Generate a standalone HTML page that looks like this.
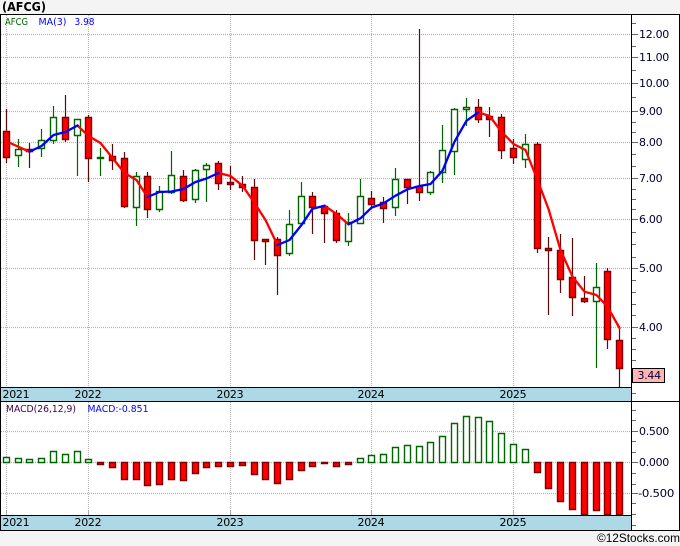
<!DOCTYPE html>
<html><head><meta charset="utf-8"><style>
html,body{margin:0;padding:0;background:#f4f4f4}
svg{display:block}
text{font-family:"DejaVu Sans","Liberation Sans",sans-serif;font-size:11px;letter-spacing:-.3px;fill:#000033}
</style></head><body>
<svg width="680" height="546" viewBox="0 0 680 546" xmlns="http://www.w3.org/2000/svg">
<rect width="680" height="546" fill="#f4f4f4"/>
<rect x="0" y="14" width="680" height="516" fill="#fff"/>
<rect x="1" y="387" width="630" height="14" fill="#add8e6"/>
<rect x="1" y="515" width="630" height="15" fill="#add8e6"/>
<g stroke="#b4b4b4" stroke-width="1.2" stroke-dasharray="1 1" fill="none">
<path d="M1 34.5H631M1 57.5H631M1 83.5H631M1 111.5H631M1 142.5H631M1 178.5H631M1 219.5H631M1 268.5H631M1 327.5H631M1 431.5H631M1 462.5H631M1 493.5H631"/>
<path d="M6.5 15V387M88.5 15V387M230.5 15V387M371.5 15V387M513.5 15V387M6.5 402V515M88.5 402V515M230.5 402V515M371.5 402V515M513.5 402V515"/>
</g>
<path d="M6.5 510V515M88.5 510V515M230.5 510V515M371.5 510V515M513.5 510V515" stroke="#aaa" fill="none" shape-rendering="crispEdges"/>
<g fill="none">
<path stroke="#006400" stroke-width="1.2" d="M18.5 139V167M41.5 129V157M53.5 106V144M77.5 119V176M100.5 148V176M136.5 172V226M159.5 186V212M171.5 151V194M195.5 169V203M206.5 163V202M289.5 210V256M301.5 182V223M348.5 213V246M360.5 179V223M395.5 168V216M430.5 171V195M442.5 125V183M454.5 108V175M466.5 98V126M525.5 134V168M596.5 263V368"/>
<path stroke="#5a0a0a" stroke-width="1.2" d="M6.5 109V163M29.5 143V168M65.5 95V142M88.5 115V182M112.5 144V170M124.5 152V208M147.5 172V218M183.5 170V202M218.5 161V190M230.5 166V190M242.5 176V192M254.5 179V260M265.5 239V265M277.5 237V295M312.5 192V234M324.5 206V243M336.5 210V243M371.5 191V208M383.5 197V223M407.5 179V204M419.5 29V201M478.5 99V123M489.5 107V137M501.5 114V159M513.5 139V164M537.5 142V253M548.5 237V315M560.5 234V293M572.5 238V316M584.5 276V303M607.5 268V349M619.5 328V387"/>
<path stroke="#006400" stroke-width="1.4" fill="#fff" d="M15.5 149.5h6V155.5h-6zM38.5 140.5h6V148.5h-6zM50.5 117.5h6V140.5h-6zM74.5 119.5h6V135.5h-6zM133.5 176.5h6V207.5h-6zM156.5 191.5h6V209.5h-6zM168.5 175.5h6V192.5h-6zM192.5 170.5h6V199.5h-6zM203.5 165.5h6V169.5h-6zM286.5 224.5h6V253.5h-6zM298.5 196.5h6V223.5h-6zM345.5 222.5h6V241.5h-6zM357.5 196.5h6V223.5h-6zM392.5 179.5h6V207.5h-6zM427.5 172.5h6V192.5h-6zM439.5 150.5h6V172.5h-6zM451.5 109.5h6V151.5h-6zM463.5 107.5h6V109.5h-6zM522.5 144.5h6V159.5h-6zM593.5 287.5h6V301.5h-6z"/>
<path stroke="#006400" stroke-width="1.4" fill="#006400" d="M97.5 157.5h6V158.5h-6z"/>
<path stroke="#800000" stroke-width="1.4" fill="#f00" d="M3.5 131.5h6V157.5h-6zM26.5 149.5h6V151.5h-6zM62.5 117.5h6V139.5h-6zM85.5 117.5h6V158.5h-6zM109.5 156.5h6V160.5h-6zM121.5 158.5h6V206.5h-6zM144.5 176.5h6V209.5h-6zM180.5 176.5h6V200.5h-6zM215.5 163.5h6V183.5h-6zM227.5 182.5h6V184.5h-6zM239.5 184.5h6V187.5h-6zM251.5 187.5h6V240.5h-6zM262.5 239.5h6V241.5h-6zM274.5 239.5h6V255.5h-6zM309.5 196.5h6V207.5h-6zM321.5 206.5h6V213.5h-6zM333.5 213.5h6V240.5h-6zM368.5 198.5h6V204.5h-6zM380.5 202.5h6V208.5h-6zM404.5 179.5h6V187.5h-6zM416.5 186.5h6V192.5h-6zM475.5 107.5h6V119.5h-6zM486.5 116.5h6V119.5h-6zM498.5 117.5h6V150.5h-6zM510.5 148.5h6V157.5h-6zM534.5 144.5h6V248.5h-6zM545.5 248.5h6V250.5h-6zM557.5 250.5h6V279.5h-6zM569.5 277.5h6V297.5h-6zM581.5 298.5h6V301.5h-6zM604.5 271.5h6V339.5h-6zM616.5 340.5h6V368.5h-6z"/>
</g>
<g fill="none" stroke-width="2.3" stroke-linejoin="round" stroke-linecap="round">
<polyline stroke="#f00" points="10,143 29.5,151.7"/>
<polyline stroke="#f00" points="77.5,125.5 88.5,136 100.5,143 112.5,158 124.5,173 136.5,180 147.5,197"/>
<polyline stroke="#f00" points="218.5,173 230.5,176 242.5,185.7 254.5,203 265.5,220 277.5,245"/>
<polyline stroke="#f00" points="324.5,205.7 336.5,214 348.5,224.3"/>
<polyline stroke="#f00" points="478.5,112.3 489.5,116 501.5,131.7 513.5,144 525.5,150 537.5,180 548.5,209 560.5,250 572.5,276.7 584.5,291.7 596.5,295 607.5,306.7 619.5,328"/>
<polyline stroke="#00f" points="29.5,151.7 41.5,146 53.5,135 65.5,132 77.5,125.5"/>
<polyline stroke="#00f" points="147.5,197 159.5,192 171.5,191.5 183.5,189 195.5,182 206.5,178.5 218.5,173"/>
<polyline stroke="#00f" points="277.5,245 289.5,240 301.5,225 312.5,208.7 324.5,205.7"/>
<polyline stroke="#00f" points="348.5,224.3 360.5,218.3 371.5,207.7 383.5,203.3 395.5,195.7 407.5,189.3 419.5,186 430.5,184 442.5,170.7 454.5,141.7 466.5,120.7 478.5,112.3"/>
</g>
<g fill="none" stroke-width="1.4">
<path stroke="#006400" fill="#fff" d="M3.5 457.5h6V462.5h-6zM15.5 458.5h6V462.5h-6zM26.5 459.5h6V462.5h-6zM38.5 458.5h6V462.5h-6zM50.5 451.5h6V462.5h-6zM62.5 454.5h6V462.5h-6zM74.5 451.5h6V462.5h-6zM85.5 459.5h6V462.5h-6zM357.5 458.5h6V462.5h-6zM368.5 455.5h6V462.5h-6zM380.5 454.5h6V462.5h-6zM392.5 447.5h6V462.5h-6zM404.5 445.5h6V462.5h-6zM416.5 446.5h6V462.5h-6zM427.5 442.5h6V462.5h-6zM439.5 436.5h6V462.5h-6zM451.5 423.5h6V462.5h-6zM463.5 416.5h6V462.5h-6zM475.5 417.5h6V462.5h-6zM486.5 421.5h6V462.5h-6zM498.5 433.5h6V462.5h-6zM510.5 444.5h6V462.5h-6zM522.5 449.5h6V462.5h-6z"/>
<path stroke="#800000" fill="#f00" d="M97.5 462.5h6V464.5h-6zM109.5 462.5h6V467.5h-6zM121.5 462.5h6V479.5h-6zM133.5 462.5h6V479.5h-6zM144.5 462.5h6V485.5h-6zM156.5 462.5h6V484.5h-6zM168.5 462.5h6V479.5h-6zM180.5 462.5h6V480.5h-6zM192.5 462.5h6V473.5h-6zM203.5 462.5h6V467.5h-6zM215.5 462.5h6V466.5h-6zM227.5 462.5h6V466.5h-6zM239.5 462.5h6V465.5h-6zM251.5 462.5h6V474.5h-6zM262.5 462.5h6V479.5h-6zM274.5 462.5h6V483.5h-6zM286.5 462.5h6V479.5h-6zM298.5 462.5h6V470.5h-6zM309.5 462.5h6V466.5h-6zM321.5 462.5h6V463.5h-6zM333.5 462.5h6V466.5h-6zM345.5 462.5h6V464.5h-6zM534.5 462.5h6V472.5h-6zM545.5 462.5h6V488.5h-6zM557.5 462.5h6V501.5h-6zM569.5 462.5h6V509.5h-6zM581.5 462.5h6V514.5h-6zM593.5 462.5h6V510.5h-6zM604.5 462.5h6V514.5h-6zM616.5 462.5h6V514.5h-6z"/>
</g>
<g shape-rendering="crispEdges" fill="none" stroke="#000">
<path d="M0 14.5H680M0 387.5H631M0 401.5H680M0 515.5H631M0 530.5H680M0.5 14V531M631.5 14V531M679.5 14V531"/>
</g>
<g shape-rendering="crispEdges" fill="none" stroke="#666">
<path d="M632 23.5h4M632 34.5h6M632 46.5h4M632 57.5h6M632 70.5h4M632 83.5h6M632 97.5h4M632 111.5h6M632 122.5h4M632 132.5h4M632 142.5h6M632 154.5h4M632 166.5h4M632 178.5h6M632 189.5h4M632 199.5h4M632 209.5h4M632 219.5h6M632 232.5h4M632 244.5h4M632 257.5h4M632 268.5h6M632 280.5h4M632 292.5h4M632 304.5h4M632 315.5h4M632 327.5h6M632 338.5h4M632 349.5h4M632 360.5h4M632 393.5h4"/>
<path d="M632 410.5h4M632 420.5h4M632 431.5h6M632 441.5h4M632 452.5h4M632 462.5h6M632 473.5h4M632 484.5h4M632 493.5h6M632 503.5h4M632 514.5h4M632 525.5h4"/>
</g>
<rect x="632.5" y="368.5" width="32" height="14" fill="#ffb4b4" stroke="#000" shape-rendering="crispEdges"/>
<text x="2" y="11" style="font-size:12px;font-weight:bold;fill:#000;letter-spacing:0" textLength="44" lengthAdjust="spacingAndGlyphs">(AFCG)</text>
<text x="5" y="25" style="font-size:9.5px;fill:#006400;letter-spacing:0" textLength="23" lengthAdjust="spacingAndGlyphs">AFCG</text>
<text x="38.5" y="25" style="font-size:9.5px;fill:#0000ff;letter-spacing:0" textLength="28" lengthAdjust="spacingAndGlyphs">MA(3)</text>
<text x="74.5" y="25" style="font-size:9.5px;fill:#0000ff;letter-spacing:0" textLength="20" lengthAdjust="spacingAndGlyphs">3.98</text>
<text x="639" y="38">12.00</text>
<text x="639" y="61">11.00</text>
<text x="639" y="87">10.00</text>
<text x="639" y="115">9.00</text>
<text x="639" y="146">8.00</text>
<text x="639" y="182">7.00</text>
<text x="639" y="223">6.00</text>
<text x="639" y="272">5.00</text>
<text x="639" y="331">4.00</text>
<text x="637.5" y="379">3.44</text>
<text x="2.5" y="398" style="fill:#000">2021</text>
<text x="74.5" y="398" style="fill:#000">2022</text>
<text x="216.5" y="398" style="fill:#000">2023</text>
<text x="357.5" y="398" style="fill:#000">2024</text>
<text x="499.5" y="398" style="fill:#000">2025</text>
<text x="2.5" y="526" style="fill:#000">2021</text>
<text x="74.5" y="526" style="fill:#000">2022</text>
<text x="216.5" y="526" style="fill:#000">2023</text>
<text x="357.5" y="526" style="fill:#000">2024</text>
<text x="499.5" y="526" style="fill:#000">2025</text>
<text x="6" y="412" style="font-size:10px;fill:#400040;letter-spacing:0" textLength="70" lengthAdjust="spacingAndGlyphs">MACD(26,12,9)</text>
<text x="87.5" y="412" style="font-size:10px;fill:#0000ff;letter-spacing:0" textLength="61" lengthAdjust="spacingAndGlyphs">MACD:-0.851</text>
<text x="639" y="435">0.500</text>
<text x="639" y="466">0.000</text>
<text x="638" y="497" textLength="36" lengthAdjust="spacingAndGlyphs">-0.500</text>
<text x="597" y="542" style="font-family:'Liberation Sans',sans-serif;font-size:12px;fill:#000;letter-spacing:0" textLength="83" lengthAdjust="spacingAndGlyphs">©12Stocks.com</text>
</svg>
</body></html>
